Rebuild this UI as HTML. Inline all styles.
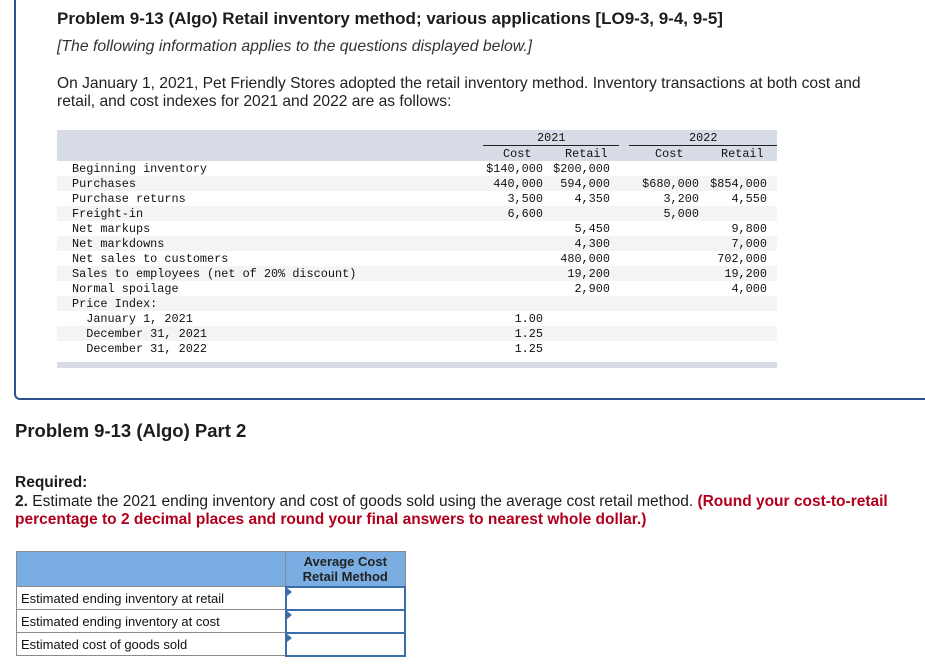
<!DOCTYPE html>
<html><head><meta charset="utf-8"><style>
body{margin:0;width:925px;height:668px;background:#fff;position:relative;overflow:hidden;font-family:"Liberation Sans",sans-serif;color:#222}
.a{position:absolute;white-space:nowrap}
.box{position:absolute;left:14px;top:-10px;width:930px;height:408px;border-left:2px solid #2c5290;border-bottom:2px solid #2c5290;border-bottom-left-radius:6px}
.m{font-family:"Liberation Mono",monospace;font-size:11.85px;color:#111}
.r{text-align:right}
.row{position:absolute;left:57px;width:720px;height:15px}
.g{background:#f4f4f4}
td{border:1px solid #8a8a8a;font-size:13px;padding:0 4px;color:#111;position:relative}
.tri{position:absolute;left:0;top:0;width:0;height:0;border-top:4px solid transparent;border-bottom:4px solid transparent;border-left:5px solid #3b6ea8}
</style></head><body>
<div class="box"></div>
<div class="a" style="left:57px;top:9px;font-size:17px;font-weight:bold;color:#1c1c1c">Problem 9-13 (Algo) Retail inventory method; various applications [LO9-3, 9-4, 9-5]</div>
<div class="a" style="left:57px;top:38px;font-size:15.8px;font-style:italic;color:#333">[The following information applies to the questions displayed below.]</div>
<div class="a" style="left:57px;top:75px;font-size:15.6px;line-height:18px;color:#222">On January 1, 2021, Pet Friendly Stores adopted the retail inventory method. Inventory transactions at both cost and<br>retail, and cost indexes for 2021 and 2022 are as follows:</div>

<div class="a" style="left:57px;top:130px;width:720px;height:31px;background:#d8dce6"></div>
<div class="row g" style="top:176px"></div>
<div class="row g" style="top:206px"></div>
<div class="row g" style="top:236px"></div>
<div class="row g" style="top:266px"></div>
<div class="row g" style="top:296px"></div>
<div class="row g" style="top:326px"></div>
<div class="a" style="left:57px;top:362px;width:720px;height:6px;background:#d8dce6"></div>
<div class="a" style="left:483px;top:145px;width:136px;height:1px;background:#222"></div>
<div class="a" style="left:629px;top:145px;width:148px;height:1px;background:#222"></div>
<div class="a m" style="left:537px;top:131px">2021</div>
<div class="a m" style="left:689px;top:131px">2022</div>
<div class="a m" style="left:503px;top:147px">Cost</div>
<div class="a m" style="left:565px;top:147px">Retail</div>
<div class="a m" style="left:655px;top:147px">Cost</div>
<div class="a m" style="left:721px;top:147px">Retail</div>

<div class="a m" style="left:72px;top:162px;line-height:15px">Beginning inventory<br>Purchases<br>Purchase returns<br>Freight-in<br>Net markups<br>Net markdowns<br>Net sales to customers<br>Sales to employees (net of 20% discount)<br>Normal spoilage<br>Price Index:<br>&nbsp;&nbsp;January 1, 2021<br>&nbsp;&nbsp;December 31, 2021<br>&nbsp;&nbsp;December 31, 2022</div>
<div class="a m r" style="right:382px;top:162px;line-height:15px">$140,000<br>440,000<br>3,500<br>6,600<br><br><br><br><br><br><br>1.00<br>1.25<br>1.25</div>
<div class="a m r" style="right:315px;top:162px;line-height:15px">$200,000<br>594,000<br>4,350<br>&nbsp;<br>5,450<br>4,300<br>480,000<br>19,200<br>2,900</div>
<div class="a m r" style="right:226px;top:162px;line-height:15px">&nbsp;<br>$680,000<br>3,200<br>5,000</div>
<div class="a m r" style="right:158px;top:162px;line-height:15px">&nbsp;<br>$854,000<br>4,550<br>&nbsp;<br>9,800<br>7,000<br>702,000<br>19,200<br>4,000</div>

<div class="a" style="left:15px;top:420px;font-size:18.5px;font-weight:bold;color:#1c1c1c">Problem 9-13 (Algo) Part 2</div>
<div class="a" style="left:15px;top:474px;font-size:15.5px;line-height:18.5px;color:#1c1c1c"><b>Required:</b><br><b>2.</b> Estimate the 2021 ending inventory and cost of goods sold using the average cost retail method. <b style="color:#b0001e">(Round your cost-to-retail<br>percentage to 2 decimal places and round your final answers to nearest whole dollar.)</b></div>

<table style="position:absolute;left:16px;top:551px;border-collapse:collapse;width:390px">
<tr style="height:35px"><td style="background:#7aaee3;width:260px"></td><td style="background:#7aaee3;text-align:center;font-weight:bold;line-height:15px;color:#222">Average Cost<br>Retail Method</td></tr>
<tr style="height:23px"><td>Estimated ending inventory at retail</td><td style="border:2px solid #3b6ea8"><div class="tri"></div></td></tr>
<tr style="height:23px"><td>Estimated ending inventory at cost</td><td style="border:2px solid #3b6ea8"><div class="tri"></div></td></tr>
<tr style="height:23px"><td>Estimated cost of goods sold</td><td style="border:2px solid #3b6ea8"><div class="tri"></div></td></tr>
</table>
</body></html>
